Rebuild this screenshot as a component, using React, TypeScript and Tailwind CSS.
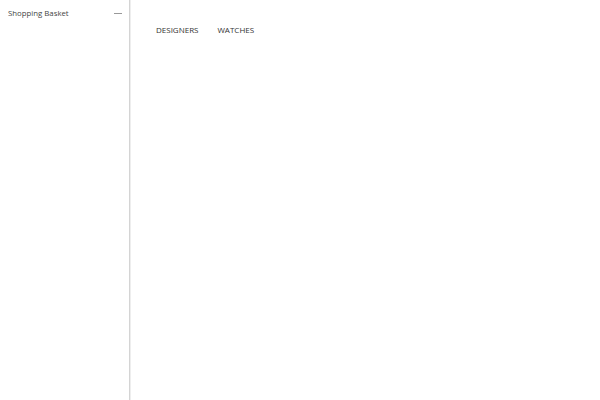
export default function App() {
  return (
    <div className="flex h-[400px] w-[600px] bg-white" style={{ fontFamily: '"Open Sans", "Liberation Sans", sans-serif' }}>
      <aside className="flex w-[130px] shrink-0 flex-col border-r border-[#d4d4d4]">
        <div className="flex items-center justify-between pl-[8px] pr-[7px] pt-[7px]">
          <span className="text-[7.8px] leading-[12px] text-[#444]">Shopping Basket</span>
          <span className="block h-px w-[8px] bg-[#999]" />
        </div>
      </aside>
      <main className="flex-1 border-l border-[#eeeeee]">
        <nav className="flex gap-[19px] pl-[25px] pt-[24px] text-[8px] leading-[12px] text-[#333]">
          <span>DESIGNERS</span>
          <span>WATCHES</span>
        </nav>
      </main>
    </div>
  );
}
